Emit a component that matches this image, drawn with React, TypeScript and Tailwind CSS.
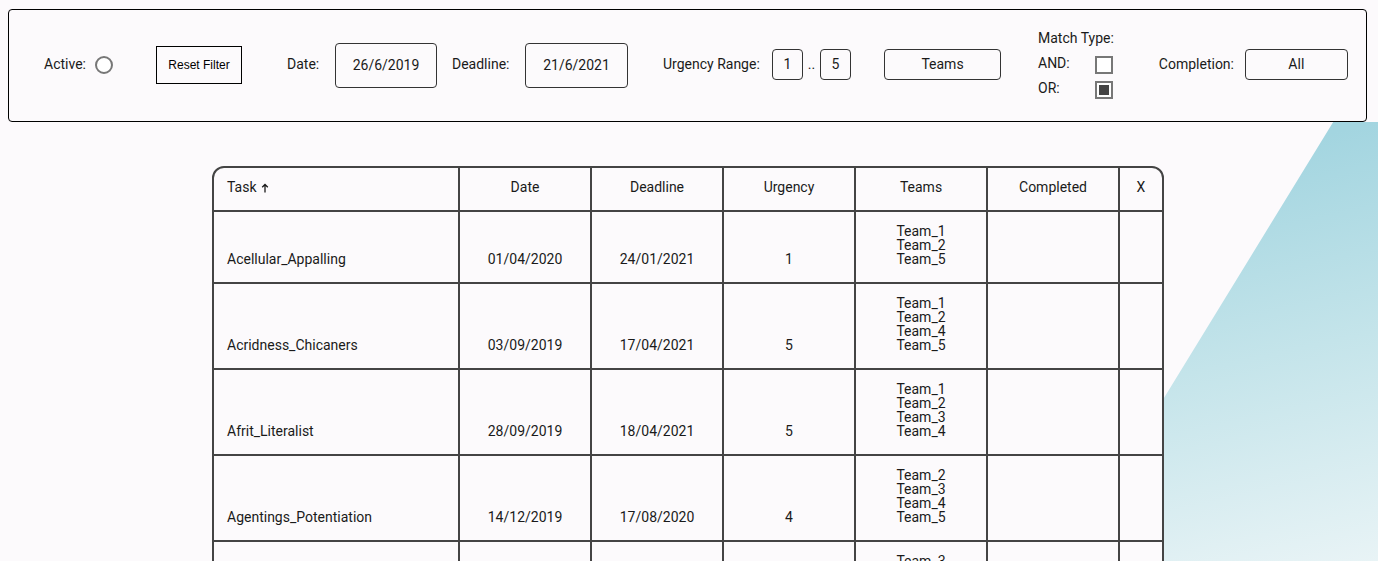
import React from 'react';

type Row = {
  task: string;
  date: string;
  deadline: string;
  urgency: number;
  teams: string[];
};

const rows: Row[] = [
  { task: 'Acellular_Appalling', date: '01/04/2020', deadline: '24/01/2021', urgency: 1, teams: ['Team_1', 'Team_2', 'Team_5'] },
  { task: 'Acridness_Chicaners', date: '03/09/2019', deadline: '17/04/2021', urgency: 5, teams: ['Team_1', 'Team_2', 'Team_4', 'Team_5'] },
  { task: 'Afrit_Literalist', date: '28/09/2019', deadline: '18/04/2021', urgency: 5, teams: ['Team_1', 'Team_2', 'Team_3', 'Team_4'] },
  { task: 'Agentings_Potentiation', date: '14/12/2019', deadline: '17/08/2020', urgency: 4, teams: ['Team_2', 'Team_3', 'Team_4', 'Team_5'] },
  { task: 'Agglutinin_Bystander', date: '09/07/2019', deadline: '02/03/2021', urgency: 2, teams: ['Team_3', 'Team_4', 'Team_5'] },
];

const headers = ['Date', 'Deadline', 'Urgency', 'Teams', 'Completed', 'X'];

export default function App() {
  return (
    <div className="relative h-[561px] overflow-hidden bg-[#fcfafc] text-[#1a1a1a] font-['Roboto',sans-serif]">
      {/* background wave */}
      <svg className="absolute inset-0 h-full w-full" viewBox="0 0 1378 561" preserveAspectRatio="none">
        <defs>
          <linearGradient id="wave" gradientUnits="userSpaceOnUse" x1="1300" y1="140" x2="1400" y2="580">
            <stop offset="0" stopColor="#a3d5e0" />
            <stop offset="0.45" stopColor="#c4e4ea" />
            <stop offset="1" stopColor="#ecf5f7" />
          </linearGradient>
        </defs>
        <path d="M1408 0 L1064 561 L1378 561 L1378 0 Z" fill="url(#wave)" />
      </svg>

      {/* Filter bar */}
      <div className="relative z-10 h-[122px] bg-[#fcfafc] pl-[8px] pt-[9px]">
        <div className="flex h-[113px] w-[1359px] items-center rounded-[4px] border border-black pb-[2px] pl-[35px] text-[14px]">
          <span className="w-[51px]">Active:</span>
          <span className="h-[18px] w-[18px] rounded-full border-2 border-[#777] bg-white" />

          <button className="ml-[43px] h-[38px] w-[86px] border border-black bg-transparent font-['Liberation_Sans',sans-serif] text-[12px] text-black">
            Reset Filter
          </button>

          <span className="ml-[45px] w-[48px]">Date:</span>
          <div className="mt-[1px] flex h-[45px] w-[102px] items-center justify-center rounded-[4px] border border-[#333]">26/6/2019</div>

          <span className="ml-[15px] w-[73px]">Deadline:</span>
          <div className="mt-[1px] flex h-[45px] w-[103px] items-center justify-center rounded-[4px] border border-[#333]">21/6/2021</div>

          <span className="ml-[35px] w-[109px]">Urgency Range:</span>
          <div className="flex h-[31px] w-[31px] items-center justify-center rounded-[4px] border border-[#333]">1</div>
          <span className="w-[17px] text-center">..</span>
          <div className="flex h-[31px] w-[31px] items-center justify-center rounded-[4px] border border-[#333]">5</div>

          <div className="ml-[33px] flex h-[31px] w-[117px] items-center justify-center rounded-[4px] border border-[#333]">Teams</div>

          <div className="mb-[3px] ml-[37px] flex flex-col">
            <div className="flex h-[25px] items-center">Match Type:</div>
            <div className="flex h-[25px] items-center">
              <span className="w-[57px]">AND:</span>
              <span className="mt-[4px] h-[18px] w-[18px] border-2 border-[#777] bg-white" />
            </div>
            <div className="flex h-[25px] items-center">
              <span className="w-[57px]">OR:</span>
              <span className="mt-[4px] flex h-[18px] w-[18px] items-center justify-center border-2 border-[#777] bg-white">
                <span className="h-[10px] w-[10px] bg-[#444]" />
              </span>
            </div>
          </div>

          <span className="ml-[45px] w-[86px]">Completion:</span>
          <div className="flex h-[31px] w-[103px] items-center justify-center rounded-[4px] border border-[#333]">All</div>
        </div>
      </div>

      {/* Task table */}
      <div className="relative z-10 ml-[212px] mt-[44px] w-[952px] overflow-hidden rounded-t-[12px] border-2 border-[#444] bg-[#444] text-[14px]">
        <div className="grid grid-cols-[244px_130px_130px_130px_130px_130px_42px] gap-[2px]">
          <div className="flex h-[42px] items-center bg-[#fcfafc] pb-[4px] pl-[13px]">
            Task
            <svg className="ml-[4px] mt-[1px]" width="8" height="10" viewBox="0 0 8 10" fill="none" stroke="#1a1a1a" strokeWidth="1.3">
              <path d="M4 9.5V1.5M1.2 4.3L4 1.5l2.8 2.8" />
            </svg>
          </div>
          {headers.map((h) => (
            <div key={h} className="flex h-[42px] items-center justify-center bg-[#fcfafc] pb-[4px]">
              {h}
            </div>
          ))}

          {rows.map((r) => (
            <React.Fragment key={r.task}>
              <div className="flex items-end bg-[#fcfafc] pb-[15px] pl-[13px] leading-[16px]">{r.task}</div>
              <div className="flex items-end justify-center bg-[#fcfafc] pb-[15px] leading-[16px]">{r.date}</div>
              <div className="flex items-end justify-center bg-[#fcfafc] pb-[15px] leading-[16px]">{r.deadline}</div>
              <div className="flex items-end justify-center bg-[#fcfafc] pb-[15px] leading-[16px]">{r.urgency}</div>
              <div className="flex flex-col items-center justify-end bg-[#fcfafc] pb-[16px] pt-[12px] leading-[14px]">
                {r.teams.map((t) => (
                  <span key={t}>{t}</span>
                ))}
              </div>
              <div className="bg-[#fcfafc]" />
              <div className="bg-[#fcfafc]" />
            </React.Fragment>
          ))}
        </div>
      </div>
    </div>
  );
}
